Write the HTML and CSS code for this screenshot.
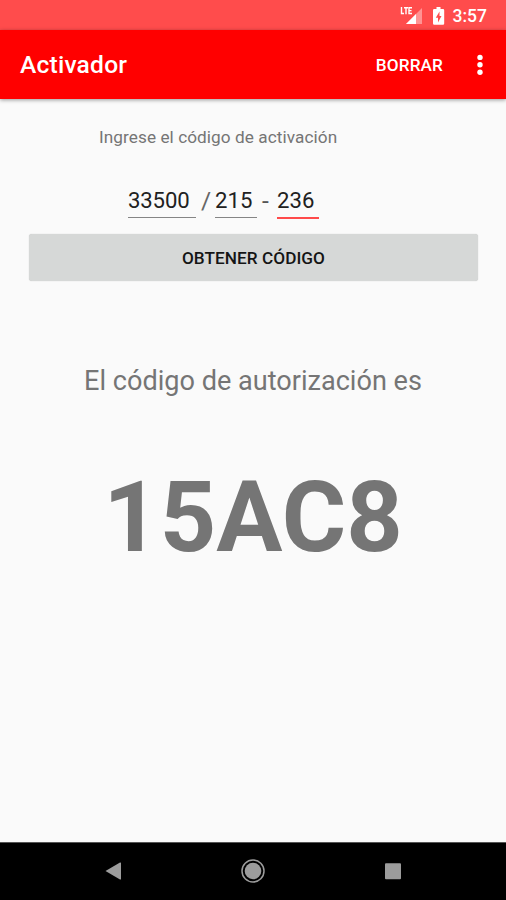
FILE: index.html
```html
<!DOCTYPE html>
<html lang="es">
<head>
<meta charset="utf-8">
<title>Activador</title>
<link rel="stylesheet" href="styles.css">
</head>
<body>
<div class="statusbar">
  <svg class="signal" width="24" height="20" viewBox="0 0 24 20">
    <path d="M22 1V17H6Z" fill="#fff" opacity=".4"/>
    <path d="M16 7V17H6Z" fill="#fff"/>
    <path d="M1.500 0V6.500H4M4 .7H8M6 .7V7.200M12 .7H9V6.500H12M9 3.600H11.500" fill="none" stroke="#fff" stroke-width="1.400"/>
  </svg>
  <svg class="battery" width="12" height="20" viewBox="0 0 12 20">
    <path fill="#fff" fill-rule="evenodd" d="M3.500 0H7.500V2H10Q11.200 2 11.200 3.200V16.500Q11.200 17.700 10 17.700H1.200Q0 17.700 0 16.500V3.200Q0 2 1.200 2H3.500ZM6.500 4.500L2.800 10.800H5V15.500L8.500 9H6.500Z"/>
  </svg>
  <span class="clock">3:57</span>
</div>
<header class="appbar">
  <h1 class="title">Activador</h1>
  <button class="action">BORRAR</button>
  <svg class="more" width="8" height="22" viewBox="0 0 8 22" fill="#fff">
    <circle cx="4" cy="3.400" r="2.700"/><circle cx="4" cy="10.800" r="2.700"/><circle cx="4" cy="18.200" r="2.700"/>
  </svg>
</header>
<main class="content">
  <p class="hint">Ingrese el código de activación</p>
  <div class="fields">
    <span class="field field-long">33500</span>
    <span class="slash">/</span>
    <span class="field">215</span>
    <span class="dash">-</span>
    <span class="field field-active">236</span>
  </div>
  <button class="submit">OBTENER CÓDIGO</button>
  <p class="caption">El código de autorización es</p>
  <p class="code">15AC8</p>
</main>
<nav class="navbar">
  <svg width="24" height="24" viewBox="0 0 24 24"><path d="M4.500 12L19 3.500Q20 3.200 20 4V20Q20 20.800 19 20.500Z" fill="#9c9c9c"/></svg>
  <svg width="24" height="24" viewBox="0 0 24 24"><circle cx="12" cy="12" r="11" fill="none" stroke="#9c9c9c" stroke-width="1.500"/><circle cx="12" cy="12" r="8.300" fill="#9c9c9c"/></svg>
  <svg width="24" height="24" viewBox="0 0 24 24"><rect x="4" y="4.300" width="16" height="16" rx="1" fill="#9c9c9c"/></svg>
</nav>
</body>
</html>
```
FILE: styles.css
```css
* { box-sizing: border-box; }
body {
  margin: 0;
  height: 900px;
  display: flex;
  flex-direction: column;
  overflow: hidden;
  background: #fafafa;
  color: #757575;
  font-family: Roboto, sans-serif;
}
h1, p { margin: 0; }
button { border: 0; padding: 0; font-family: inherit; }
.statusbar {
  height: 30px;
  display: flex;
  padding: 7px 19px 0 0;
  justify-content: flex-end;
  background: #ff4c4c;
}
.battery { margin-left: 9px; }
.clock {
  margin-left: 8px;
  color: #fff;
  font-size: 17.500px;
  line-height: 19px;
  font-weight: 500;
}
.appbar {
  height: 69px;
  flex: none;
  display: flex;
  align-items: center;
  padding: 0 22px 0 20px;
  background: #f00;
  box-shadow: 0 1px 4px rgba(0, 0, 0, .4);
}
.title {
  flex: 1;
  color: #fff;
  font-size: 24.600px;
  line-height: 30px;
  font-weight: 500;
  letter-spacing: .2px;
  padding-top: 1px;
}
.action {
  margin-right: 33px;
  background: none;
  color: #fff;
  font-size: 17.200px;
  font-weight: 500;
  letter-spacing: .1px;
}
.content {
  flex: 1;
  display: flex;
  flex-direction: column;
}
.hint {
  padding: 28px 0 0 99px;
  font-size: 17.200px;
  line-height: 20px;
  letter-spacing: .07px;
}
.fields {
  display: flex;
  height: 32px;
  margin: 40px 0 0 128px;
  color: #212121;
  font-size: 22.150px;
  line-height: 27px;
}
.field {
  width: 42px;
  height: 31px;
  border-bottom: 1px solid #858585;
}
.field-long { width: 68px; letter-spacing: -.15px; }
.field-active { height: 32px; border-bottom: 2px solid #ff4a4a; }
.slash { width: 19px; padding-left: 5px; color: #666; font-size: 24.600px; }
.dash { width: 20px; padding-left: 5px; color: #555; font-size: 24.600px; }
.submit {
  height: 47px;
  margin: 15px 28px 0 29px;
  border-radius: 3px;
  background: #d6d8d7;
  box-shadow: 0 0 1px rgba(0, 0, 0, .25);
  color: #151515;
  font-size: 17.200px;
  font-weight: 500;
  letter-spacing: .05px;
}
.caption {
  margin-top: 84px;
  font-size: 27.100px;
  line-height: 32px;
  text-align: center;
}
.code {
  margin-top: 63px;
  font-size: 98.500px;
  line-height: 116px;
  font-weight: 700;
  text-align: center;
}
.navbar {
  height: 58px;
  flex: none;
  display: flex;
  justify-content: space-between;
  align-items: center;
  padding: 0 101px 2px;
  background: #000;
  border-top: 1px solid #555;
}
```
